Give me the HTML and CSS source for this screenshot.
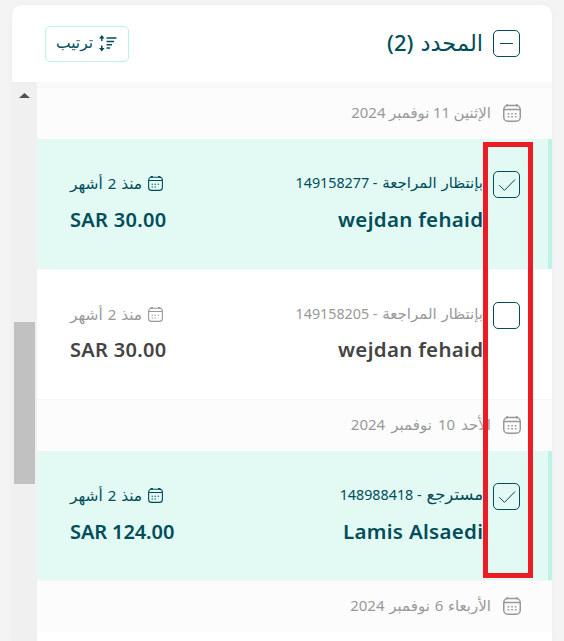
FILE: index.html
```html
<!DOCTYPE html>
<html lang="ar" dir="rtl">
<head>
    <meta charset="UTF-8">
    <meta name="viewport" content="width=device-width, initial-scale=1.0">
    <title>المحدد (2)</title>
    <link rel="stylesheet" href="styles.css">
</head>
<body>
    <svg class="sprite" width="0" height="0">
        <symbol id="calendar" viewBox="0 0 18 18">
            <rect x="0.75" y="1.5" width="16.5" height="15.75" rx="4"/>
            <path d="M1 5.5h16M4.2 0v2.2M13.8 0v2.2"/>
            <path d="M4.6 9.7h1.7M8.2 9.7h1.7M11.8 9.7h1.7M4.6 12.7h1.7M8.2 12.7h1.7M11.8 12.7h1.7"/>
        </symbol>
        <symbol id="calendar-small" viewBox="0 0 15 15">
            <rect x="0.6" y="1.2" width="13.8" height="13.2" rx="3"/>
            <path d="M1 4.5h13M2.5 0.6h2.5M10 0.6h2.5"/>
            <path d="M3.6 8.2h1.4M6.5 8.2h1.4M9.6 8.2h1.4M3.6 11h1.4M6.5 11h1.4"/>
        </symbol>
        <symbol id="check" viewBox="0 0 18 14">
            <path d="M1.2 7.2l5.3 5.2L17 1.5"/>
        </symbol>
    </svg>

    <div class="card">
        <div class="header">
            <div class="header-title">
                <div class="checkbox"><span class="minus"></span></div>
                <h1>المحدد <span class="latin">(2)</span></h1>
            </div>
            <button class="btn-sort">
                <svg class="sort-icon" viewBox="0 0 18 17">
                    <path d="M7.5 3h10M7.5 6.5h7.5M7.5 9.7h5.5M7.5 13h3.5"/>
                    <path d="M2.8 6V1.5M2.8 10.5v4.5"/>
                    <path class="arrow" d="M0 3.6L2.8 0l2.8 3.6zM0 12.9l2.8 3.6 2.8-3.6z"/>
                </svg>
                <span>ترتيب</span>
            </button>
        </div>

        <div class="content">
            <div class="list">
                <div class="date-row date-row-first">
                    <svg class="date-icon"><use href="#calendar"/></svg>
                    <span class="date-text tight">الإثنين <span class="latin">11</span> نوفمبر <span class="latin">2024</span></span>
                </div>

                <div class="order selected">
                    <div class="checkbox"><svg class="check"><use href="#check"/></svg></div>
                    <div class="order-info">
                        <div class="order-line">
                            <span>بإنتظار المراجعة <span class="latin">- 149158277</span></span>
                            <span class="order-time"><svg class="time-icon"><use href="#calendar-small"/></svg><span>منذ <span class="latin">2</span> أشهر</span></span>
                        </div>
                        <div class="order-main" dir="ltr">
                            <span class="price">SAR 30.00</span>
                            <span class="name">wejdan fehaid</span>
                        </div>
                    </div>
                </div>

                <div class="order order-plain">
                    <div class="checkbox"></div>
                    <div class="order-info">
                        <div class="order-line">
                            <span>بإنتظار المراجعة <span class="latin">- 149158205</span></span>
                            <span class="order-time"><svg class="time-icon"><use href="#calendar-small"/></svg><span>منذ <span class="latin">2</span> أشهر</span></span>
                        </div>
                        <div class="order-main" dir="ltr">
                            <span class="price">SAR 30.00</span>
                            <span class="name">wejdan fehaid</span>
                        </div>
                    </div>
                </div>

                <div class="date-row">
                    <svg class="date-icon"><use href="#calendar"/></svg>
                    <span class="date-text wide">الأحد <span class="latin">10</span> نوفمبر <span class="latin">2024</span></span>
                </div>

                <div class="order selected">
                    <div class="checkbox"><svg class="check"><use href="#check"/></svg></div>
                    <div class="order-info">
                        <div class="order-line">
                            <span><span class="status-returned">مسترجع</span> <span class="latin">- 148988418</span></span>
                            <span class="order-time"><svg class="time-icon"><use href="#calendar-small"/></svg><span>منذ <span class="latin">2</span> أشهر</span></span>
                        </div>
                        <div class="order-main" dir="ltr">
                            <span class="price price-long">SAR 124.00</span>
                            <span class="name">Lamis Alsaedi</span>
                        </div>
                    </div>
                </div>

                <div class="date-row">
                    <svg class="date-icon"><use href="#calendar"/></svg>
                    <span class="date-text">الأربعاء <span class="latin">6</span> نوفمبر <span class="latin">2024</span></span>
                </div>
            </div>

            <div class="scrollbar">
                <div class="scroll-arrow"></div>
                <div class="scroll-thumb"></div>
            </div>
        </div>
    </div>

    <div class="highlight"></div>
</body>
</html>
```
FILE: styles.css
```css
* {
    margin: 0;
    padding: 0;
    box-sizing: border-box;
}

body {
    position: relative;
    height: 641px;
    overflow: hidden;
    padding: 5px 12px 0;
    background: #f4f4f4;
    font-family: "DejaVu Sans", sans-serif;
    color: #444;
}

.sprite {
    position: absolute;
}

svg {
    display: block;
    flex-shrink: 0;
    fill: none;
    stroke: currentColor;
    stroke-width: 1.5;
}

.latin {
    font-family: "Noto Sans", sans-serif;
}

.card {
    height: 636px;
    display: flex;
    flex-direction: column;
    background: #fff;
    border-radius: 10px 10px 0 0;
    box-shadow: 0 0 10px rgba(0, 0, 0, 0.03);
    overflow: hidden;
}

/* Header */
.header {
    height: 77px;
    flex-shrink: 0;
    display: flex;
    align-items: center;
    justify-content: space-between;
    padding: 0 32px 0 33px;
    color: #004d5a;
}

.header-title {
    display: flex;
    align-items: center;
    gap: 10px;
}

.header h1 {
    font-size: 22.5px;
    font-weight: normal;
    line-height: 30px;
    padding-bottom: 2px;
    white-space: nowrap;
}

.header h1 .latin {
    font-size: 22px;
    font-weight: 500;
}

.btn-sort {
    width: 84px;
    height: 36px;
    display: flex;
    align-items: center;
    gap: 6px;
    padding: 0 11px 2px 0;
    background: #fff;
    border: 1px solid #b9f2e3;
    border-radius: 5px;
    font-family: inherit;
    font-size: 15.5px;
    color: #004d5a;
}

.sort-icon {
    width: 18px;
    height: 17px;
    margin-top: 2px;
}

.sort-icon .arrow {
    fill: currentColor;
    stroke: none;
}

.checkbox {
    width: 27px;
    height: 27px;
    flex-shrink: 0;
    display: flex;
    align-items: center;
    justify-content: center;
    border: 1px solid #004d5a;
    border-radius: 5px;
    color: #004d5a;
}

.minus {
    width: 13px;
    height: 1px;
    background: #004d5a;
}

.check {
    width: 18px;
    height: 14px;
    stroke-width: 1;
}

/* List */
.content {
    flex: 1;
    display: flex;
}

.list {
    flex: 1;
    min-width: 0;
}

.date-row {
    height: 52px;
    display: flex;
    align-items: center;
    gap: 12px;
    padding: 0 31px 2px 0;
    background: #fcfcfc;
    border-top: 1px solid #f5f5f5;
    font-size: 15px;
    color: #999;
    white-space: nowrap;
}

.date-row-first {
    margin-top: 5px;
    box-shadow: 0 -5px 0 #fafafa;
}

.date-icon {
    width: 18px;
    height: 18px;
}

.date-text {
    padding-bottom: 1px;
}

.date-text.tight {
    word-spacing: -1.3px;
}

.date-text.wide {
    word-spacing: 1.3px;
}

.order {
    height: 130px;
    display: flex;
    gap: 10px;
    padding: 32px 32px 0 33px;
}

.order.selected {
    padding-right: 28px;
    background: #e3f9f4;
    border-right: 4px solid #bdf2e4;
    color: #004d5a;
}

.order-plain {
    padding-top: 33px;
}

.date-row + .order:nth-last-child(2) {
    height: 129px;
}

.order-info {
    flex: 1;
}

.order-line {
    height: 24px;
    display: flex;
    align-items: center;
    justify-content: space-between;
    font-size: 15px;
    line-height: 22px;
    color: #999;
    white-space: nowrap;
}

.order-line .latin {
    font-size: 14.3px;
}

.status-returned {
    font-size: 16.5px;
}

.selected .order-line {
    color: #004d5a;
}

.order-time {
    display: flex;
    align-items: center;
    gap: 6px;
    font-size: 15.4px;
}

.order-time .latin {
    font-size: 15px;
}

.time-icon {
    width: 15px;
    height: 15px;
    stroke-width: 1.1;
}

.order-main {
    height: 48px;
    display: flex;
    align-items: center;
    justify-content: space-between;
    font-family: "Noto Sans", sans-serif;
    font-size: 20px;
    font-weight: 600;
}

.order-plain .order-main {
    height: 46px;
}

.price {
    letter-spacing: 0.3px;
}

.price-long {
    letter-spacing: -0.1px;
}

.name {
    font-size: 20.5px;
    letter-spacing: 0.3px;
    margin-right: -0.3px;
}

/* Scrollbar */
.scrollbar {
    width: 25px;
    background: #f0f0f0;
    padding: 11px 2px 0;
}

.scroll-arrow {
    width: 11px;
    height: 5px;
    margin: 0 auto;
    background: #505050;
    clip-path: polygon(50% 0, 100% 100%, 0 100%);
}

.scroll-thumb {
    width: 21px;
    height: 162px;
    margin-top: 224px;
    background: #c1c1c1;
}

/* Red frame around the checkboxes */
.highlight {
    position: absolute;
    left: 483px;
    top: 142px;
    width: 50px;
    height: 436px;
    border: 5px solid #ed1c24;
}
```
